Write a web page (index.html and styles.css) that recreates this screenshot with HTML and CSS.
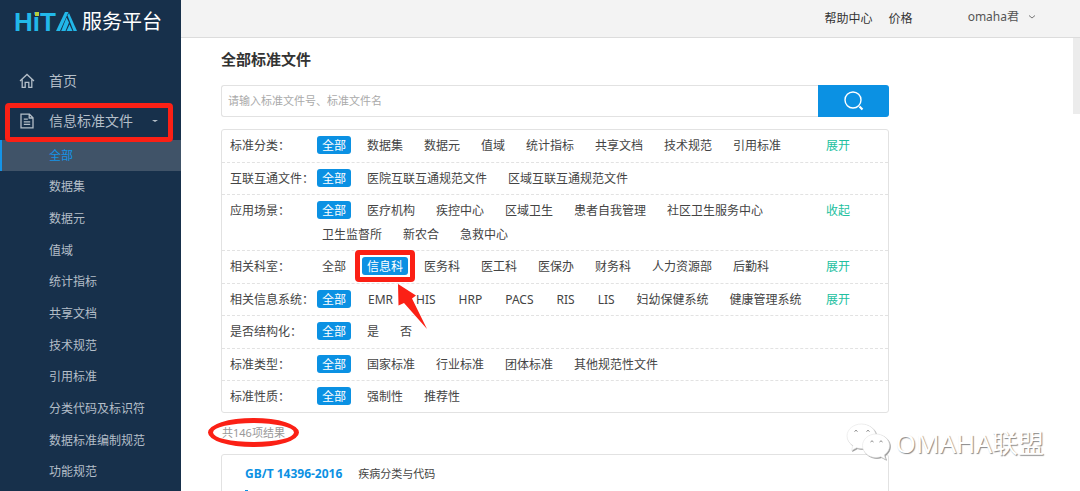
FILE: index.html
```html
<!DOCTYPE html>
<html lang="zh-CN">
<head>
<meta charset="utf-8">
<meta name="viewport" content="width=device-width, initial-scale=1">
<title>全部标准文件 - HiTA服务平台</title>
<link rel="stylesheet" href="styles.css">
</head>
<body>
<div class="app">
  <aside class="sidebar">
    <a class="logo" href="#">
      <span class="logo-word">H<span class="logo-i">i</span>T</span>
      <svg class="logo-mark" viewBox="0 0 21 19" aria-hidden="true">
        <path d="M9 0h3.500L4 19H0z" fill="#22b8ea"/>
        <path d="M10.500 5.500l2.500 5L9.500 19H5.200z" fill="#22b8ea"/>
        <path d="M11.500 3.500L13 1l8 18h-3.500z" fill="#22b8ea"/>
        <path d="M13.500 12.500L16.500 19h-6z" fill="#22b8ea"/>
      </svg>
      <span class="logo-name">服务平台</span>
    </a>
    <nav class="menu">
      <a class="menu-item" href="#">
        <svg class="menu-icon" viewBox="0 0 16 16" aria-hidden="true"><path d="M1 8L8 1.500 15 8M3.200 6.500v7.900h3V9.300h3.600v5.100h3V6.500" /></svg>
        <span>首页</span>
      </a>
      <a class="menu-item menu-item--open" href="#">
        <svg class="menu-icon" viewBox="0 0 16 16" aria-hidden="true"><path d="M2 1.200h8.400l3.600 3.600v10H2zM10.200 1.200V5H14M4.800 6.200h4M4.800 8.800h6.400M4.800 11.400h6.400"/></svg>
        <span>信息标准文件</span>
        <span class="menu-caret"></span>
        <span class="mark mark--menu"></span>
      </a>
      <ul class="submenu">
        <li><a class="is-active" href="#">全部</a></li>
        <li><a href="#">数据集</a></li>
        <li><a href="#">数据元</a></li>
        <li><a href="#">值域</a></li>
        <li><a href="#">统计指标</a></li>
        <li><a href="#">共享文档</a></li>
        <li><a href="#">技术规范</a></li>
        <li><a href="#">引用标准</a></li>
        <li><a href="#">分类代码及标识符</a></li>
        <li><a href="#">数据标准编制规范</a></li>
        <li><a href="#">功能规范</a></li>
      </ul>
    </nav>
  </aside>

  <div class="page">
    <header class="topbar">
      <a href="#">帮助中心</a>
      <a href="#">价格</a>
      <button class="user" type="button">omaha君
        <svg viewBox="0 0 8 6" aria-hidden="true"><path d="M1 1.500l3 2.500 3-2.500"/></svg>
      </button>
    </header>

    <main class="content">
      <h1>全部标准文件</h1>
      <form class="search">
        <input type="text" aria-label="搜索标准文件" placeholder="请输入标准文件号、标准文件名">
        <button type="button" aria-label="搜索">
          <svg viewBox="0 0 20 20" aria-hidden="true"><circle cx="9" cy="9" r="8"/><path d="M15.500 15.500l3 3" stroke-width="2.200"/></svg>
        </button>
      </form>

      <section class="filters">
        <div class="filter filter--roomy">
          <span class="filter-label">标准分类：</span>
          <div class="tags"><a class="tag is-on" href="#">全部</a><a class="tag" href="#">数据集</a><a class="tag" href="#">数据元</a><a class="tag" href="#">值域</a><a class="tag" href="#">统计指标</a><a class="tag" href="#">共享文档</a><a class="tag" href="#">技术规范</a><a class="tag" href="#">引用标准</a></div>
          <button class="toggle" type="button">展开</button>
        </div>
        <div class="filter">
          <span class="filter-label">互联互通文件：</span>
          <div class="tags"><a class="tag is-on" href="#">全部</a><a class="tag" href="#">医院互联互通规范文件</a><a class="tag" href="#">区域互联互通规范文件</a></div>
        </div>
        <div class="filter">
          <span class="filter-label">应用场景：</span>
          <div class="tags"><a class="tag is-on" href="#">全部</a><a class="tag" href="#">医疗机构</a><a class="tag" href="#">疾控中心</a><a class="tag" href="#">区域卫生</a><a class="tag" href="#">患者自我管理</a><a class="tag" href="#">社区卫生服务中心</a><a class="tag" href="#">卫生监督所</a><a class="tag" href="#">新农合</a><a class="tag" href="#">急救中心</a></div>
          <button class="toggle" type="button">收起</button>
        </div>
        <div class="filter filter--roomy">
          <span class="filter-label">相关科室：</span>
          <div class="tags"><a class="tag" href="#">全部</a><a class="tag is-on" href="#">信息科<span class="mark mark--tag"></span><svg class="arrow" viewBox="0 0 34 50" aria-hidden="true"><path d="M2 1L20 12.500 16 15.500 31 46 8 20 2.500 22.500z"/></svg></a><a class="tag" href="#">医务科</a><a class="tag" href="#">医工科</a><a class="tag" href="#">医保办</a><a class="tag" href="#">财务科</a><a class="tag" href="#">人力资源部</a><a class="tag" href="#">后勤科</a></div>
          <button class="toggle" type="button">展开</button>
        </div>
        <div class="filter">
          <span class="filter-label">相关信息系统：</span>
          <div class="tags"><a class="tag is-on" href="#">全部</a><a class="tag tag--code" href="#">EMR</a><a class="tag tag--code" href="#">HIS</a><a class="tag tag--code" href="#">HRP</a><a class="tag tag--code" href="#">PACS</a><a class="tag tag--code" href="#">RIS</a><a class="tag tag--code" href="#">LIS</a><a class="tag" href="#">妇幼保健系统</a><a class="tag" href="#">健康管理系统</a></div>
          <button class="toggle" type="button">展开</button>
        </div>
        <div class="filter filter--roomy">
          <span class="filter-label">是否结构化：</span>
          <div class="tags"><a class="tag is-on" href="#">全部</a><a class="tag" href="#">是</a><a class="tag" href="#">否</a></div>
        </div>
        <div class="filter">
          <span class="filter-label">标准类型：</span>
          <div class="tags"><a class="tag is-on" href="#">全部</a><a class="tag" href="#">国家标准</a><a class="tag" href="#">行业标准</a><a class="tag" href="#">团体标准</a><a class="tag" href="#">其他规范性文件</a></div>
        </div>
        <div class="filter">
          <span class="filter-label">标准性质：</span>
          <div class="tags"><a class="tag is-on" href="#">全部</a><a class="tag" href="#">强制性</a><a class="tag" href="#">推荐性</a></div>
        </div>
      </section>

      <p class="count"><span>共146项结果<span class="mark mark--count"></span></span></p>

      <article class="result">
        <div class="result-head"><a href="#">GB/T 14396-2016</a><span>疾病分类与代码</span></div>
        <div class="result-flag"></div>
      </article>
    </main>
    <div class="scroll-thumb"></div>
  </div>

  <div class="watermark">
    <svg viewBox="0 0 46 40" aria-hidden="true">
      <path class="wm-bubble" d="M15.500 1C7.500 1 1 6.300 1 13c0 4 2.300 7.300 5.800 9.500L5.500 27.500l5-2.700c1.600.4 3.300.7 5 .7 8 0 14.500-5.500 14.500-12.300S23.500 1 15.500 1z"/>
      <path class="wm-bubble" d="M30 11c-7.500 0-13.500 5.200-13.500 11.700S22.500 34.500 30 34.500c1.700 0 3.300-.3 4.800-.8l4.700 2.600-1.300-4.300c3.200-2.200 5.300-5.500 5.300-9.300C43.500 16.200 37.500 11 30 11z"/>
      <path class="wm-eye" d="M8.500 8.500q1.500-2.500 3 0M20.500 8.500q1.500-2.500 3 0M24.500 19q1.500-2.500 3 0M33.500 19q1.500-2.500 3 0"/>
    </svg>
    <span>OMAHA联盟</span>
  </div>
</div>
</body>
</html>
```
FILE: styles.css
```css
* { box-sizing: border-box; }

body {
  margin: 0;
  overflow: hidden;
  background: #fff;
  color: #444;
  font: 12px/18px "Noto Sans", "Noto Sans CJK SC", sans-serif;
}

a { color: inherit; text-decoration: none; }
button, input { font: inherit; margin: 0; border: 0; padding: 0; background: none; }

.app { position: relative; display: flex; height: 100vh; overflow: hidden; }

/* Sidebar */
.sidebar { flex: 0 0 181px; overflow: hidden; background: #17304b; color: #b4bec8; }

.logo { display: flex; align-items: center; height: 43px; padding-left: 14px; }
.logo-word { color: #22b8ea; font: bold 26px/26px "Liberation Sans", Arial, sans-serif; }
.logo-i { position: relative; }
.logo-i::after {
  content: "";
  position: absolute;
  left: 2px;
  top: 5px;
  width: 4px;
  height: 4px;
  background: #b5cf3c;
}
.logo-mark { width: 21px; height: 19px; }
.logo-name { margin-left: 5px; color: #fff; font-size: 20px; line-height: 28px; }

.menu { padding-top: 18px; }
.menu-item {
  position: relative;
  display: flex;
  align-items: center;
  height: 40px;
  padding: 0 23px 0 19px;
  font-size: 14px;
}
.menu-item--open { height: 39px; }
.menu-icon { width: 16px; height: 16px; margin-right: 14px; fill: none; stroke: #b4bec8; stroke-width: 1.3; }
.menu-caret { margin-left: auto; border: 3px solid transparent; border-top: 2px solid #b4bec8; border-bottom: 0; }

.submenu { margin: 0; padding: 0; list-style: none; }
.submenu a { display: block; height: 32px; padding-left: 49px; line-height: 32px; }
.submenu li:nth-child(3n+1) a { height: 31px; }
.submenu .is-active { background: #405368; color: #1593e6; box-shadow: inset 2px 0 #1593e6; }

/* Top bar */
.page { position: relative; flex: 1; min-width: 0; }
.topbar {
  display: flex;
  align-items: center;
  justify-content: flex-end;
  gap: 16px;
  height: 38px;
  padding-right: 44px;
  border-bottom: 1px solid #dcdcdc;
  background: #f3f3f3;
  color: #333;
}
.user { display: flex; align-items: center; gap: 9px; margin-left: 39px; color: #555; line-height: 18px; padding-bottom: 3px; }
.user svg { width: 8px; height: 6px; fill: none; stroke: #777; }
.scroll-thumb { position: absolute; right: 0; top: 38px; width: 7px; height: 76px; background: #ececec; }

/* Content */
.content { max-width: 748px; padding: 9px 40px 0; }
h1 { margin: 0; color: #333; font-size: 15px; line-height: 24px; }

.search { display: flex; height: 32px; margin-top: 14px; }
.search input {
  flex: 1;
  min-width: 0;
  padding: 0 6px;
  border: 1px solid #e2e2e2;
  border-right: 0;
  border-radius: 3px 0 0 3px;
  color: #444;
  font-size: 11px;
}
.search input::placeholder { color: #aaa; opacity: 1; }
.search button { display: flex; align-items: center; justify-content: center; width: 71px; border-radius: 0 3px 3px 0; background: #0b91e3; }
.search svg { width: 20px; height: 20px; fill: none; stroke: #fff; stroke-width: 1.4; }

.filters { margin-top: 12px; border: 1px solid #e2e2e2; border-radius: 3px; }
.filter { display: flex; padding: 6px 0 7px 8px; border-bottom: 1px dashed #e2e2e2; }
.filter--roomy { padding-bottom: 8px; }
.filter:last-child { border-bottom: 0; }
.filter-label { flex: 0 0 87px; line-height: 20px; height: 18px; }
.tags { display: flex; flex: 1; flex-wrap: wrap; gap: 6px 11px; }
.tag { position: relative; height: 18px; padding: 0 5px; border-radius: 3px; line-height: 20px; white-space: nowrap; }
.tag--code { padding: 0 6px; }
.tag.is-on { background: #0b91e3; color: #fff; }
.toggle { flex: 0 0 62px; height: 18px; line-height: 20px; color: #22bfa0; text-align: left; }

.count { margin: 0; padding: 11px 1px 12px; color: #999; font-size: 11px; }
.count > span { position: relative; }

.result { height: 80px; padding: 10px 23px; border: 1px solid #e2e2e2; border-radius: 3px; }
.result-head { display: flex; gap: 16px; font-size: 11px; }
.result-head a { color: #0b91e3; font-size: 12px; font-weight: bold; }
.result-flag { width: 3px; height: 3px; margin-top: 7px; background: #0b91e3; }

/* Red annotations */
.mark { position: absolute; border: 5px solid #fb2015; border-radius: 4px; }
.mark--menu { left: 5px; right: 8px; top: 2px; height: 39px; }
.mark--tag { inset: -7px -7px; }
.mark--count { inset: -7px -14px -7px -14px; border-radius: 50%; }
.arrow { position: absolute; left: 34px; top: 26px; z-index: 2; width: 34px; height: 50px; fill: #fb2015; }

/* Watermark */
.watermark {
  position: absolute;
  right: 36px;
  bottom: 28px;
  display: flex;
  align-items: center;
  gap: 4px;
  color: #fff;
  font-size: 26px;
  line-height: 40px;
  text-shadow: 1px 1px 1px #888;
}
.watermark svg { width: 46px; height: 40px; }
.wm-bubble { fill: #fff; stroke: #e4e4e4; stroke-width: 0.6; filter: drop-shadow(1px 1px 0 #999); }
.wm-eye { fill: none; stroke: #888; }
```
